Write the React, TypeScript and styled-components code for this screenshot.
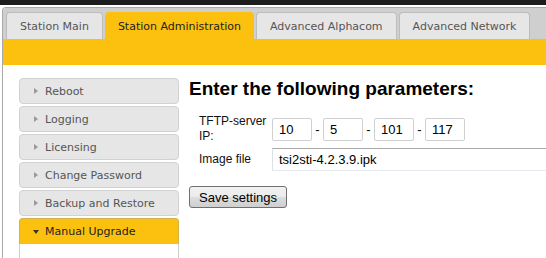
import React from "react";
import styled, { createGlobalStyle } from "styled-components";

const menuItems = [
  "Reboot",
  "Logging",
  "Licensing",
  "Change Password",
  "Backup and Restore",
];

const tabs = [
  { label: "Station Main", active: false },
  { label: "Station Administration", active: true },
  { label: "Advanced Alphacom", active: false },
  { label: "Advanced Network", active: false },
];

const ipParts = ["10", "5", "101", "117"];

export default function App() {
  return (
    <>
      <GlobalStyle />
      <TopStrip />
      <Frame>
        <TabBar>
          {tabs.map((t) => (
            <Tab key={t.label} $active={t.active}>
              {t.label}
            </Tab>
          ))}
        </TabBar>
        <Band />
        <Body>
          <Sidebar>
            {menuItems.map((item) => (
              <MenuItem key={item}>
                <ArrowRight />
                {item}
              </MenuItem>
            ))}
            <OpenHeader>
              <ArrowDown />
              Manual Upgrade
            </OpenHeader>
            <OpenPanel />
          </Sidebar>
          <Main>
            <Heading>Enter the following parameters:</Heading>
            <FormGrid>
              <Label>
                <NoWrap>TFTP-server</NoWrap> IP:
              </Label>
              <IpGroup>
                {ipParts.map((p, i) => (
                  <React.Fragment key={i}>
                    {i > 0 && <Dash>-</Dash>}
                    <IpInput defaultValue={p} />
                  </React.Fragment>
                ))}
              </IpGroup>
              <Label>Image file</Label>
              <FileInput defaultValue="tsi2sti-4.2.3.9.ipk" />
            </FormGrid>
            <SaveButton>Save settings</SaveButton>
          </Main>
        </Body>
      </Frame>
    </>
  );
}

const GlobalStyle = createGlobalStyle`
  html, body {
    margin: 0;
    background: #ffffff;
    overflow: hidden;
  }
  body {
    font-family: "DejaVu Sans", Verdana, sans-serif;
  }
`;

const TopStrip = styled.div`
  height: 5px;
  background: #1c1c1c;
  margin-bottom: 2px;
`;

const Frame = styled.div`
  margin-left: 2px;
  border-left: 1px solid #a9a9a9;
  border-top: 1px solid #a9a9a9;
  border-top-left-radius: 4px;
  overflow: hidden;
  height: 260px;
`;

const TabBar = styled.div`
  display: flex;
  gap: 2px;
  padding: 4px 0 0 3px;
  background: #cfcfcf;
`;

const Tab = styled.div<{ $active: boolean }>`
  box-sizing: border-box;
  height: 27px;
  line-height: 27px;
  padding: 0 ${(p) => (p.$active ? "12px" : "13px")};
  font-size: 11px;
  white-space: nowrap;
  border: 1px solid ${(p) => (p.$active ? "#fcc10f" : "#bdbdbd")};
  border-bottom: none;
  border-radius: 4px 4px 0 0;
  background: ${(p) => (p.$active ? "#fcc10f" : "#e6e6e6")};
  color: ${(p) => (p.$active ? "#222" : "#555")};
`;

const Band = styled.div`
  height: 26px;
  background: #fcc10f;
`;

const Body = styled.div`
  display: flex;
  gap: 10px;
  padding: 13px 0 0 16px;
`;

const Sidebar = styled.div`
  width: 160px;
  flex-shrink: 0;
  display: flex;
  flex-direction: column;
  gap: 2px;
`;

const MenuItem = styled.div`
  box-sizing: border-box;
  height: 26px;
  display: flex;
  align-items: center;
  padding-left: 14px;
  font-size: 11px;
  color: #555;
  background: #e6e6e6;
  border: 1px solid #d2d2d2;
  border-radius: 4px;
`;

const ArrowRight = styled.span`
  width: 0;
  height: 0;
  border-left: 4px solid #9a9a9a;
  border-top: 3px solid transparent;
  border-bottom: 3px solid transparent;
  margin-right: 7px;
`;

const OpenHeader = styled(MenuItem)`
  background: #fcc10f;
  border-color: #d2b24a;
  border-radius: 4px 4px 0 0;
  border-bottom: none;
  color: #222;
  padding-left: 13px;
`;

const ArrowDown = styled.span`
  width: 0;
  height: 0;
  border-top: 4px solid #333;
  border-left: 3px solid transparent;
  border-right: 3px solid transparent;
  margin-right: 6px;
`;

const OpenPanel = styled.div`
  height: 60px;
  margin-top: -2px;
  border: 1px solid #cfcfcf;
  border-top: none;
  background: #fff;
`;

const Main = styled.div`
  flex: 1;
  min-width: 0;
  font-family: "Liberation Sans", Arial, sans-serif;
`;

const Heading = styled.h2`
  margin: 0 0 14px;
  font-size: 19px;
  line-height: 22px;
  font-weight: bold;
  color: #000;
  white-space: nowrap;
`;

const FormGrid = styled.div`
  display: grid;
  grid-template-columns: 73px 1fr;
  row-gap: 4px;
  align-items: center;
  padding-left: 10px;
`;

const Label = styled.div`
  font-size: 12px;
  line-height: 15px;
  color: #111;
`;

const NoWrap = styled.span`
  white-space: nowrap;
`;

const IpGroup = styled.div`
  display: flex;
  align-items: center;
`;

const Dash = styled.span`
  width: 11px;
  text-align: center;
  font-size: 13px;
`;

const IpInput = styled.input`
  box-sizing: border-box;
  width: 40px;
  height: 23px;
  padding: 0 6px;
  font-family: "Liberation Sans", Arial, sans-serif;
  font-size: 13px;
  color: #000;
  border: 1px solid #d0d0d0;
  border-radius: 2px;
  outline: none;
`;

const FileInput = styled(IpInput)`
  width: 300px;
  border-radius: 0;
  border-color: #a9a9a9 #e2e3ea #e3e9ef #dbdfe6;
`;

const SaveButton = styled.button`
  margin-top: 15px;
  height: 22px;
  padding: 0 9px;
  font-family: "Liberation Sans", Arial, sans-serif;
  font-size: 13px;
  color: #000;
  border: 1px solid #707070;
  border-radius: 3px;
  background: linear-gradient(#f2f2f2, #ebebeb 50%, #dddddd 50%, #cfcfcf);
`;
